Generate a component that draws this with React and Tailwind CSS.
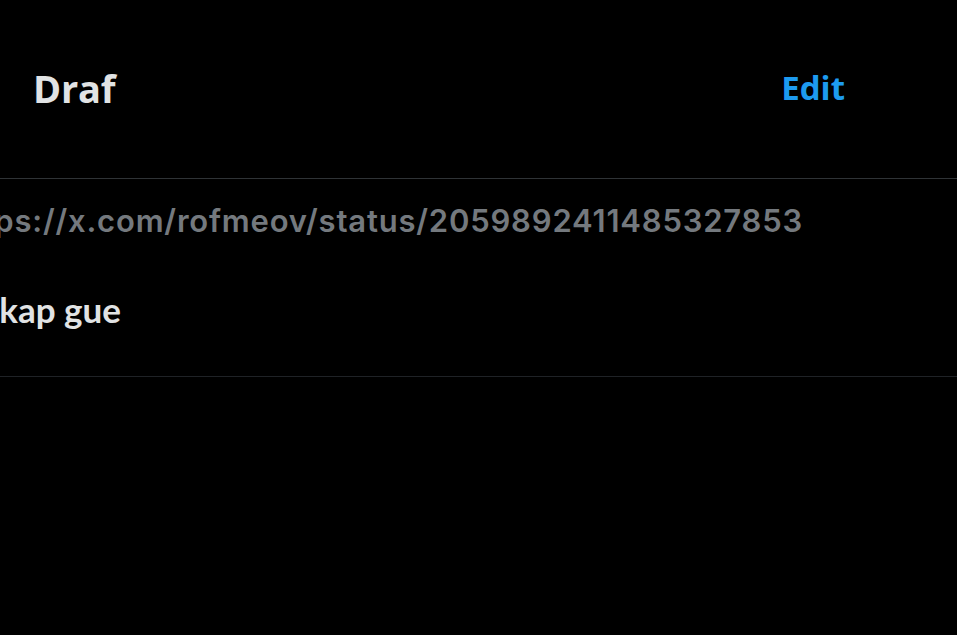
export default function App() {
  return (
    <div className="w-[957px] h-[635px] bg-black overflow-hidden relative" style={{ fontFamily: '"Open Sans", sans-serif' }}>
      <div className="h-[178px] flex items-start justify-between pl-[33px] pr-[112px] pt-[64px]">
        <div className="text-[38px] font-bold text-[#e1e3e4] leading-[48px] tracking-[-0.2px]">Draf</div>
        <div className="text-[33px] font-bold text-[#1d9bf0] leading-[48px]">Edit</div>
      </div>
      <div className="h-px bg-[#2f3336]" />
      <div className="h-[197px] overflow-hidden">
        <div className="w-[803px] flex justify-end pt-[20px]">
          <div className="shrink-0 whitespace-nowrap text-[31px] font-semibold tracking-[0.8px] text-[#74797e] leading-[44px]" style={{ fontFamily: 'Inter, sans-serif' }}>
            https://x.com/rofmeov/status/2059892411485327853
          </div>
        </div>
        <div className="w-[121px] flex justify-end pt-[42px]">
          <div className="shrink-0 whitespace-nowrap text-[35px] font-bold text-[#e1e3e4] leading-[48px]" style={{ fontFamily: 'Lato, sans-serif' }}>
            Cakap gue
          </div>
        </div>
      </div>
      <div className="h-px bg-[#1f2226]" />
    </div>
  );
}
